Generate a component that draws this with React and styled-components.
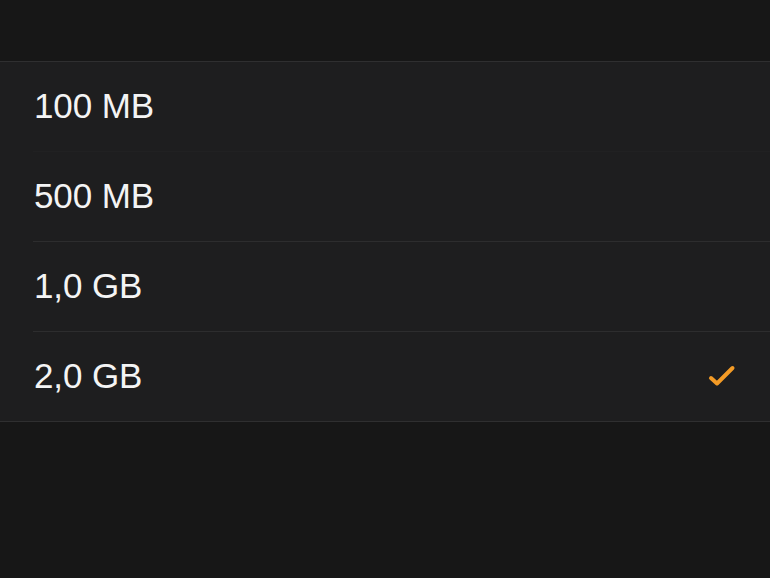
import styled, { createGlobalStyle } from "styled-components";

const GlobalStyle = createGlobalStyle`
  html, body {
    margin: 0;
    padding: 0;
    background: #171717;
    height: 100%;
  }
  #root {
    min-height: 100%;
  }
`;

const options = [
  { label: "100 MB", divider: "none" },
  { label: "500 MB", divider: "faint" },
  { label: "1,0 GB", divider: "line" },
  { label: "2,0 GB", divider: "line", selected: true },
];

const dividers = {
  none: "none",
  faint: "1px solid #212122",
  line: "1px solid #2d2d2e",
};

export default function App() {
  return (
    <Page>
      <GlobalStyle />
      <TopBar />
      <List>
        {options.map((o) => (
          <Row key={o.label} $divider={o.divider}>
            <Label>{o.label}</Label>
            {o.selected && (
              <Check viewBox="0 0 30 24" width="30" height="24">
                <path
                  d="M4 14 L10 19.5 L25.5 4"
                  fill="none"
                  stroke="#f39b26"
                  strokeWidth="4"
                  strokeLinecap="round"
                  strokeLinejoin="round"
                />
              </Check>
            )}
          </Row>
        ))}
      </List>
    </Page>
  );
}

const Page = styled.div`
  width: 770px;
  height: 578px;
  background: #171717;
  font-family: "Liberation Sans", Arial, sans-serif;
  overflow: hidden;
`;

const TopBar = styled.div`
  height: 61px;
`;

const List = styled.ul`
  margin: 0;
  padding: 0 0 0 33px;
  list-style: none;
  background: #1e1e1f;
  border-top: 1px solid #2f2f30;
  border-bottom: 1px solid #2f2f30;
`;

const Row = styled.li`
  height: 89px;
  display: flex;
  align-items: center;
  justify-content: space-between;
  padding-right: 33px;
  border-top: ${({ $divider }) => dividers[$divider]};
`;

const Label = styled.span`
  color: #f4f4f4;
  font-size: 35px;
  letter-spacing: -0.1px;
  padding-left: 1px;
  padding-bottom: 2px;
`;

const Check = styled.svg`
  display: block;
  margin-top: -2px;
`;
